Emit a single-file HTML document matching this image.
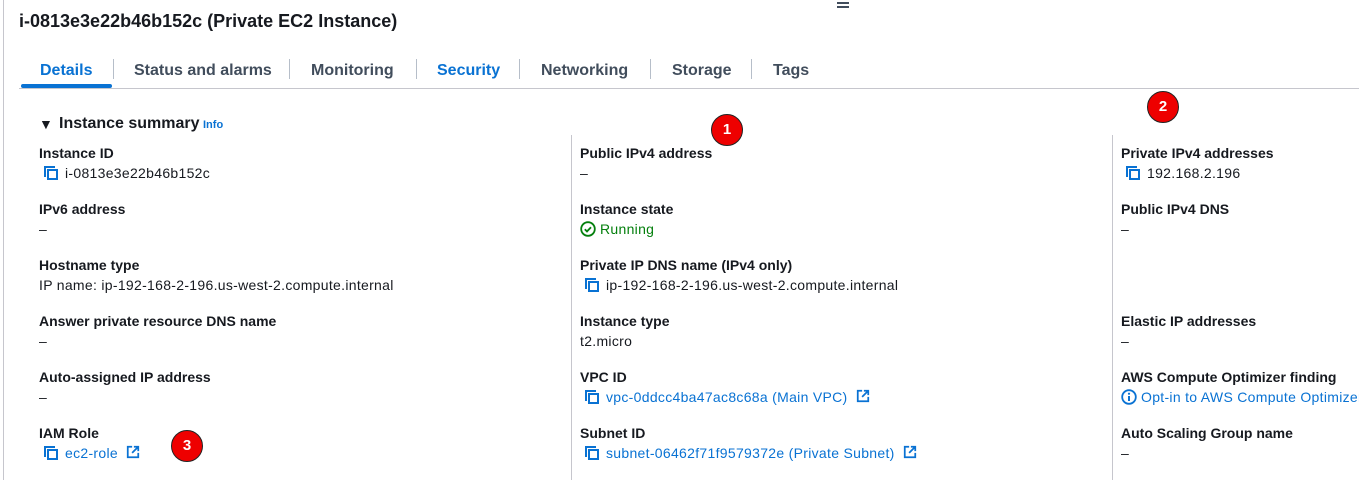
<!DOCTYPE html>
<html><head><meta charset="utf-8"><style>
*{margin:0;padding:0;box-sizing:border-box}
body{width:1359px;height:480px;background:#fff;font-family:"Liberation Sans",sans-serif;color:#16191f;position:relative;overflow:hidden}
.a{position:absolute;white-space:nowrap}
.t{font-size:18px;font-weight:bold;left:19px;top:11px}
.tab{font-size:16px;font-weight:bold;color:#414d5c;top:62px}
.sep{position:absolute;top:59px;width:1px;height:20px;background:#b6bec9}
.lb{font-size:14px;font-weight:bold;color:#16191f}
.v{font-size:14px;letter-spacing:0.3px;color:#16191f}
.lk{color:#0972d3}
.vl{position:absolute;top:135px;width:1px;height:345px;background:#c6c6cd}
.badge{position:absolute;width:32px;height:32px;border-radius:50%;background:#e00;border:1.5px solid #222;color:#fff;font-weight:bold;font-size:15px;text-align:center;line-height:29px}
svg{position:absolute}
.ix{position:relative;display:inline-block;vertical-align:-1px;margin-left:8px}
</style></head><body>
<div style="position:absolute;left:3px;top:0;width:1px;height:480px;background:#c6c6cd"></div>
<div style="position:absolute;left:837px;top:2px;width:12px;height:2px;background:#414d5c"></div>
<div style="position:absolute;left:837px;top:6px;width:12px;height:2px;background:#414d5c"></div>
<div class="a t">i-0813e3e22b46b152c (Private EC2 Instance)</div>

<div class="a tab" style="left:40px;color:#0972d3">Details</div>
<div class="sep" style="left:113px"></div>
<div class="a tab" style="left:134px">Status and alarms</div>
<div class="sep" style="left:289px"></div>
<div class="a tab" style="left:311px">Monitoring</div>
<div class="sep" style="left:416px"></div>
<div class="a tab" style="left:437px;color:#0972d3">Security</div>
<div class="sep" style="left:519px"></div>
<div class="a tab" style="left:541px">Networking</div>
<div class="sep" style="left:650px"></div>
<div class="a tab" style="left:672px">Storage</div>
<div class="sep" style="left:751px"></div>
<div class="a tab" style="left:773px">Tags</div>
<div style="position:absolute;left:19px;top:88px;width:1340px;height:1px;background:#c6c6cd"></div>
<div style="position:absolute;left:21px;top:84px;width:91px;height:4px;border-radius:2px;background:#0972d3"></div>

<div class="a" style="left:39px;top:116px;font-size:14px">▼</div>
<div class="a" style="left:59px;top:115px;font-size:16px;font-weight:bold">Instance summary</div>
<div class="a" style="left:203px;top:119px;font-size:11px;font-weight:bold;color:#0972d3">Info</div>

<div class="vl" style="left:571px"></div>
<div class="vl" style="left:1112px"></div>

<svg width="0" height="0"><defs>
<symbol id="cp" viewBox="0 0 16 16"><path d="M2 12V2h10" fill="none" stroke="#0972d3" stroke-width="2"/><rect x="5" y="5" width="9" height="9" fill="none" stroke="#0972d3" stroke-width="2"/></symbol>
<symbol id="ex" viewBox="0 0 16 16"><path d="M7 2H2v12h12V9" fill="none" stroke="#0972d3" stroke-width="2"/><path d="M9 2h5v5M14 2L7 9" fill="none" stroke="#0972d3" stroke-width="2"/></symbol>
</defs></svg>

<!-- col 1 -->
<div class="a lb" style="left:39px;top:145px">Instance ID</div>
<svg style="left:43px;top:165px" width="16" height="16"><use href="#cp"/></svg>
<div class="a v" style="left:65px;top:165px">i-0813e3e22b46b152c</div>
<div class="a lb" style="left:39px;top:201px">IPv6 address</div>
<div class="a v" style="left:39px;top:221px">–</div>
<div class="a lb" style="left:39px;top:257px">Hostname type</div>
<div class="a v" style="left:39px;top:277px">IP name: ip-192-168-2-196.us-west-2.compute.internal</div>
<div class="a lb" style="left:39px;top:313px">Answer private resource DNS name</div>
<div class="a v" style="left:39px;top:333px">–</div>
<div class="a lb" style="left:39px;top:369px">Auto-assigned IP address</div>
<div class="a v" style="left:39px;top:389px">–</div>
<div class="a lb" style="left:39px;top:425px">IAM Role</div>
<svg style="left:43px;top:445px" width="16" height="16"><use href="#cp"/></svg>
<div class="a v lk" style="left:65px;top:445px">ec2-role<svg class="ix" width="14" height="14"><use href="#ex"/></svg></div>

<!-- col 2 -->
<div class="a lb" style="left:580px;top:145px">Public IPv4 address</div>
<div class="a v" style="left:580px;top:165px">–</div>
<div class="a lb" style="left:580px;top:201px">Instance state</div>
<svg style="left:580px;top:221px" width="16" height="16" viewBox="0 0 16 16"><circle cx="8" cy="8" r="6.8" fill="none" stroke="#037f0c" stroke-width="1.8"/><path d="M4.8 8.2l2.2 2.2 4-4.2" fill="none" stroke="#037f0c" stroke-width="1.8"/></svg>
<div class="a v" style="left:600px;top:221px;color:#037f0c">Running</div>
<div class="a lb" style="left:580px;top:257px">Private IP DNS name (IPv4 only)</div>
<svg style="left:584px;top:277px" width="16" height="16"><use href="#cp"/></svg>
<div class="a v" style="left:606px;top:277px">ip-192-168-2-196.us-west-2.compute.internal</div>
<div class="a lb" style="left:580px;top:313px">Instance type</div>
<div class="a v" style="left:580px;top:333px">t2.micro</div>
<div class="a lb" style="left:580px;top:369px">VPC ID</div>
<svg style="left:584px;top:389px" width="16" height="16"><use href="#cp"/></svg>
<div class="a v lk" style="left:606px;top:389px">vpc-0ddcc4ba47ac8c68a (Main VPC)<svg class="ix" width="14" height="14"><use href="#ex"/></svg></div>
<div class="a lb" style="left:580px;top:425px">Subnet ID</div>
<svg style="left:584px;top:445px" width="16" height="16"><use href="#cp"/></svg>
<div class="a v lk" style="left:606px;top:445px">subnet-06462f71f9579372e (Private Subnet)<svg class="ix" width="14" height="14"><use href="#ex"/></svg></div>

<!-- col 3 -->
<div class="a lb" style="left:1121px;top:145px">Private IPv4 addresses</div>
<svg style="left:1125px;top:165px" width="16" height="16"><use href="#cp"/></svg>
<div class="a v" style="left:1147px;top:165px">192.168.2.196</div>
<div class="a lb" style="left:1121px;top:201px">Public IPv4 DNS</div>
<div class="a v" style="left:1121px;top:221px">–</div>
<div class="a lb" style="left:1121px;top:313px">Elastic IP addresses</div>
<div class="a v" style="left:1121px;top:333px">–</div>
<div class="a lb" style="left:1121px;top:369px">AWS Compute Optimizer finding</div>
<svg style="left:1121px;top:389px" width="16" height="16" viewBox="0 0 16 16"><circle cx="8" cy="8" r="6.8" fill="none" stroke="#0972d3" stroke-width="1.8"/><path d="M8 7v5" stroke="#0972d3" stroke-width="2"/><circle cx="8" cy="4.7" r="1.1" fill="#0972d3"/></svg>
<div class="a v lk" style="left:1141px;top:389px">Opt-in to AWS Compute Optimizer</div>
<div class="a lb" style="left:1121px;top:425px">Auto Scaling Group name</div>
<div class="a v" style="left:1121px;top:445px">–</div>

<div class="badge" style="left:711px;top:114px">1</div>
<div class="badge" style="left:1147px;top:91px">2</div>
<div class="badge" style="left:171px;top:430px">3</div>
</body></html>
